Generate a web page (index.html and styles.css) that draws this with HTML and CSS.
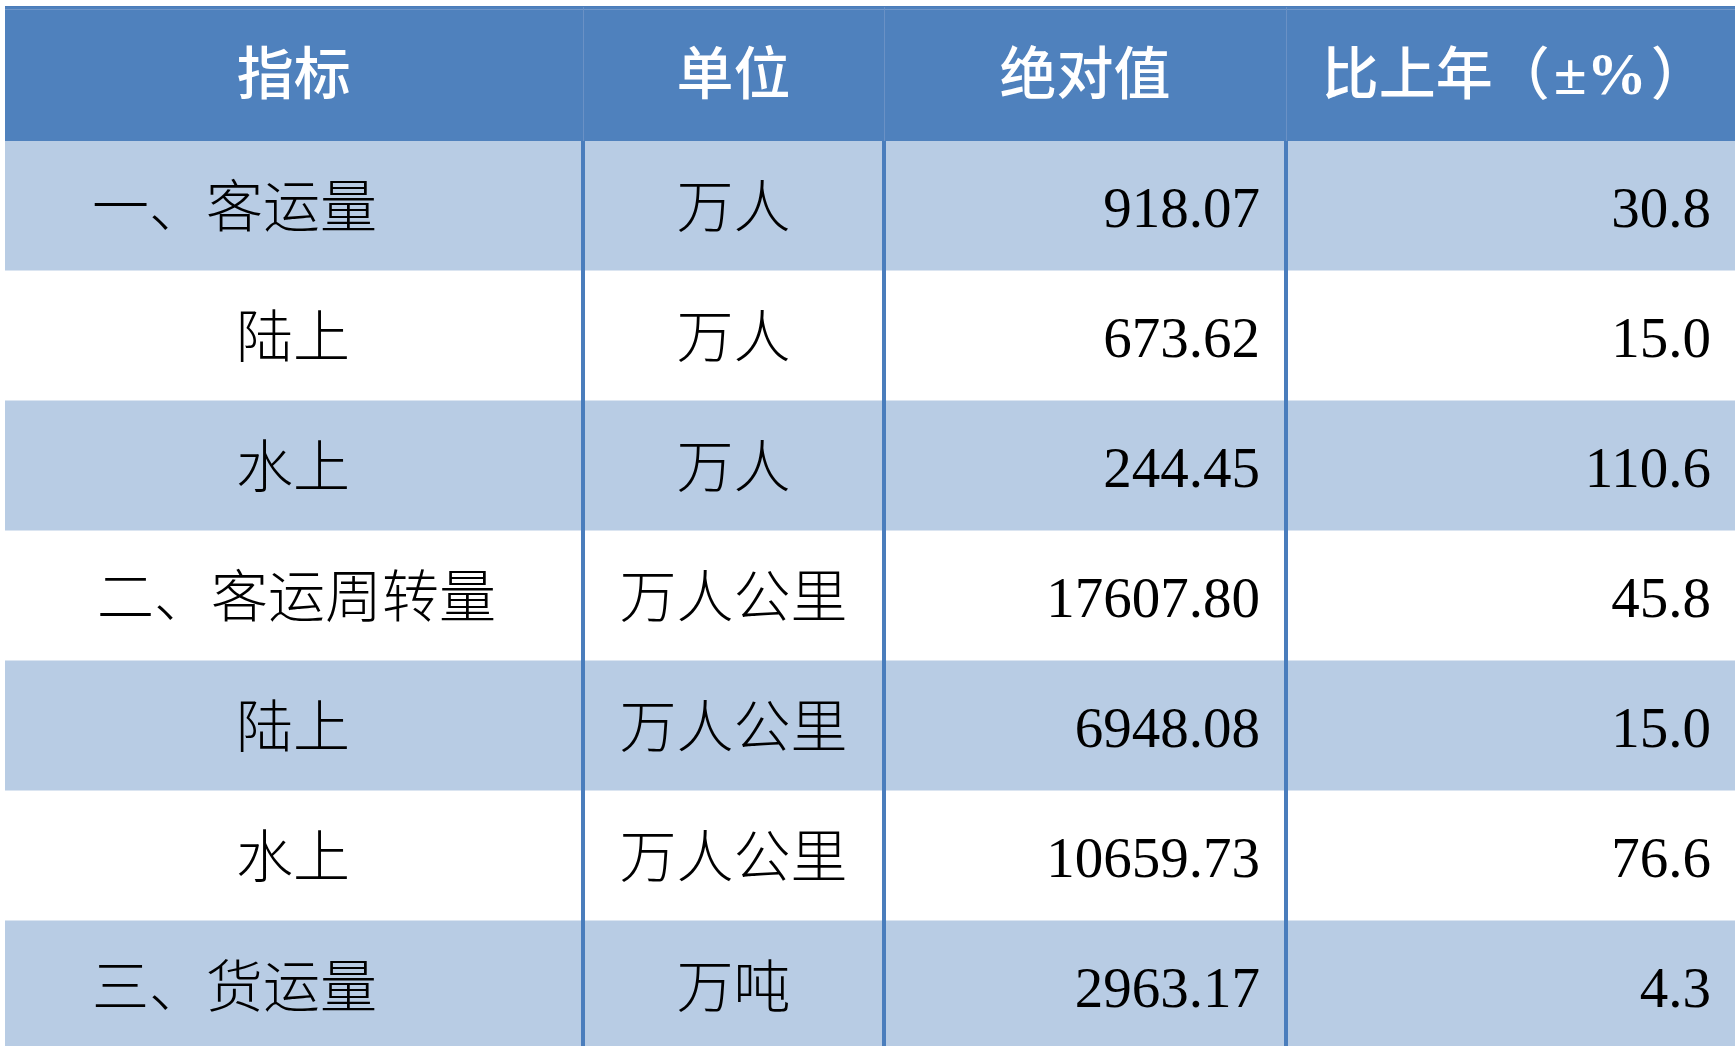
FILE: index.html
```html
<!DOCTYPE html>
<html lang="zh-CN">
<head>
<meta charset="utf-8">
<title>客货运量</title>
<link rel="stylesheet" href="styles.css">
</head>
<body>
<table class="stats">
  <colgroup>
    <col class="c1"><col class="c2"><col class="c3"><col class="c4">
  </colgroup>
  <thead>
    <tr>
      <th>指标</th>
      <th>单位</th>
      <th>绝对值</th>
      <th class="pct">比上年（<span class="sym">±%</span>）</th>
    </tr>
  </thead>
  <tbody>
    <tr class="shade">
      <td class="name lead">一、客运量</td>
      <td class="unit">万人</td>
      <td class="num">918.07</td>
      <td class="num">30.8</td>
    </tr>
    <tr>
      <td class="name">陆上</td>
      <td class="unit">万人</td>
      <td class="num">673.62</td>
      <td class="num">15.0</td>
    </tr>
    <tr class="shade">
      <td class="name">水上</td>
      <td class="unit">万人</td>
      <td class="num">244.45</td>
      <td class="num">110.6</td>
    </tr>
    <tr>
      <td class="name lead wide">二、客运周转量</td>
      <td class="unit">万人公里</td>
      <td class="num">17607.80</td>
      <td class="num">45.8</td>
    </tr>
    <tr class="shade">
      <td class="name">陆上</td>
      <td class="unit">万人公里</td>
      <td class="num">6948.08</td>
      <td class="num">15.0</td>
    </tr>
    <tr>
      <td class="name">水上</td>
      <td class="unit">万人公里</td>
      <td class="num">10659.73</td>
      <td class="num">76.6</td>
    </tr>
    <tr class="shade">
      <td class="name lead">三、货运量</td>
      <td class="unit">万吨</td>
      <td class="num">2963.17</td>
      <td class="num">4.3</td>
    </tr>
  </tbody>
</table>
</body>
</html>
```

FILE: styles.css
```css
html, body {
  margin: 0;
  padding: 0;
  background: #ffffff;
  overflow: hidden;
}

body {
  padding: 6px 0 0 5px;
}

.stats {
  border-collapse: collapse;
  table-layout: fixed;
  width: 1730px;
  font-family: "Liberation Serif", "Noto Sans CJK SC", serif;
  font-size: 57px;
  color: #000000;
}

.c1 { width: 578px; }
.c2 { width: 301px; }
.c3 { width: 402px; }
.c4 { width: 449px; }

.stats th {
  height: 134px;
  padding: 0;
  background: #4f81bd;
  color: #ffffff;
  font-weight: 500;
  text-align: center;
  vertical-align: middle;
  border-top: 1px solid #4a7cba;
  box-shadow: inset 0 2px 0 #4f81bd, inset 0 3px 0 #7197c9;
  line-height: 1;
}

.stats th.pct {
  padding-left: 8px;
}

.stats th .sym {
  font-weight: 700;
  font-size: 60px;
  margin: 0 4px;
}

.stats th + th {
  border-left: 1px solid #6a91c5;
}

.stats td {
  height: 125px;
  padding: 4px 0 0 0;
  vertical-align: middle;
  background: #ffffff;
  border-bottom: 1px solid #dbe5f1;
  line-height: 1;
  font-weight: 300;
}

.stats tr.shade td {
  background: #b8cce4;
}

.stats td + td {
  border-left: 4px solid #4a7dbc;
}

.name {
  text-align: center;
}

.name.lead {
  text-align: left;
  padding-left: 87px !important;
}

.name.lead.wide {
  padding-left: 92px !important;
}

.unit {
  text-align: center;
}

.num {
  text-align: right;
  padding-right: 24px !important;
  font-weight: 400 !important;
}
```
